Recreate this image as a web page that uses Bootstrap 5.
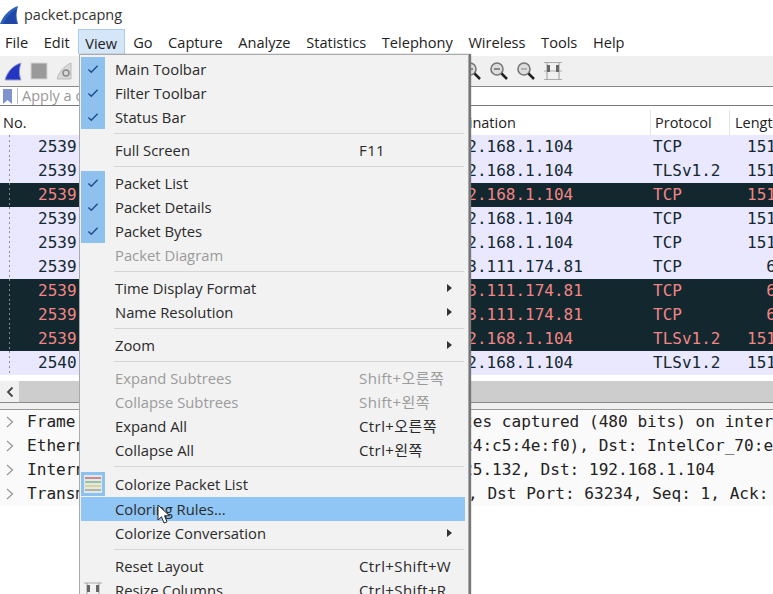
<!DOCTYPE html>
<html lang="en">
<head>
<meta charset="utf-8">
<title>packet.pcapng</title>
<link href="https://cdn.jsdelivr.net/npm/bootstrap@5.3.0/dist/css/bootstrap.min.css" rel="stylesheet">
<style>
html,body{margin:0;height:594px;overflow:hidden;background:#fff}
body{font-family:"Open Sans","Noto Sans CJK KR",sans-serif;font-size:14.8px;color:#222;position:relative;width:773px}
.ws-title{height:29px;gap:6px;font-size:14.5px;color:#333}
.ws-menubar{height:27px;padding:0 0 2px 5px;background:#fff;font-size:14.6px}
.ws-menubar span{margin-right:15.6px;line-height:27px;white-space:nowrap}
.ws-menubar .ws-open{background:#d4e6f8;border:1px solid #a9cbee;border-bottom:0;margin:0 8px 0 -7px;padding:0 7px 0 6px;height:25px;line-height:26px}
.ws-tools{height:31px;background:#f0f0f0;padding-left:4px;border-bottom:1px solid #888}
.ws-tools .ws-right{margin-left:auto;margin-right:210px;gap:7px}
.ws-filter{height:19px;background:#fff;border-bottom:1px solid #777;padding:0 0 0 3px;color:#999;font-size:14.5px}
.ws-filter .ws-sep{border-left:1px solid #bbb;height:16px;margin:0 4px 0 5px}
.ws-head{height:29px;padding-top:4px;background:#fff;font-size:14.5px;color:#222}
.ws-head div{height:25px;line-height:25px;white-space:nowrap;overflow:hidden}
.ws-hno{width:438px;flex:none;padding-left:3px}
.ws-hdst{width:213px;flex:none;border-right:1px solid #e4e4e4}
.ws-hpro{width:79px;flex:none;border-right:1px solid #e4e4e4;padding-left:4px}
.ws-hlen{flex:1;padding-left:5px}
.ws-list{font-family:"DejaVu Sans Mono","Liberation Mono",monospace;font-size:16px}
.ws-pkt{height:24px;line-height:23px;background:#e9e8ff;color:#12272e;white-space:pre;overflow:hidden}
.ws-pkt.ws-dark{background:#12272e;color:#f48585}
.ws-num{width:448px;flex:none;padding-left:38px;background-image:linear-gradient(#88a 50%,transparent 50%);background-size:1px 5px;background-repeat:repeat-y;background-position:9px 0}
.ws-dst{width:205px;flex:none}
.ws-proto{width:94px;flex:none}
.ws-len{flex:none}
.ws-spacer{height:6px;background:#fff}
.ws-hscroll{height:22px;background:#cdcdcd;border-bottom:1px solid #8a8a8a}
.ws-hscroll .ws-arrow{width:19px;background:#f0f0f0}
.ws-gap{height:7px;background:#f0f0f0;border-bottom:1px solid #999}
.ws-details{font-family:"DejaVu Sans Mono","Liberation Mono",monospace;font-size:16.1px;color:#222}
.ws-dl{height:24px;line-height:24px;white-space:pre;padding-left:6px;gap:13px;overflow:hidden;background:#fafafa}
.ws-dl svg{flex:none}
.ws-nudge{margin-right:5px}
.ws-menu.dropdown-menu{position:absolute;left:79px;top:54px;width:390px;height:560px;display:block;margin:0;padding:2px 0 0 1px;border:1px solid #aaa;border-radius:0;background:#f2f2f2;box-shadow:2px 0 1px #777;--bs-dropdown-font-size:14.8px;font-size:14.8px;color:#222}
.ws-item.dropdown-item{display:flex;align-items:center;height:24px;padding:0 3px 0 0;width:384px;color:#2a2a2a;line-height:24px;white-space:nowrap;background:transparent}
.ws-item .ws-gut{width:24px;height:24px;flex:none;margin-right:10px;display:flex;align-items:center;justify-content:center}
.ws-item .ws-gut.ws-on{background:#8fc1ef}
.ws-item .ws-lab{width:244px;flex:none}
.ws-item .ws-key{flex:1;font-size:15px;letter-spacing:.4px}
.ws-item .ws-sub{margin-right:10px;margin-left:auto;width:0;height:0;border-left:5px solid #333;border-top:4px solid transparent;border-bottom:4px solid transparent}
.ws-item.ws-off{color:#9b9b9b}
.ws-item.ws-hi{background:#90c6f5;margin-top:1px}
.ws-div{height:9px;padding:4px 4px 0 33px}
.ws-div.ws-div-tall{height:10px}
.ws-div hr{margin:0;border:0;border-top:1px solid #d6d6d6;opacity:1}
.ws-cursor{position:absolute;left:157px;top:504px;z-index:1001}
</style>
</head>
<body>
<div class="ws-title d-flex align-items-center">
  <svg width="18" height="20" viewBox="0 0 18 20"><path d="M0 19C3 11 9 4 18 1C16 7 16 13 18 19Z" fill="#2b5fb8"/><path d="M3 19C6 13 10 8 17 4C15 9 15 14 17 19Z" fill="#1f47a8"/></svg>
  <span>packet.pcapng</span>
</div>
<nav class="ws-menubar d-flex align-items-start">
  <span>File</span><span>Edit</span><span class="ws-open">View</span><span>Go</span><span>Capture</span><span>Analyze</span><span>Statistics</span><span>Telephony</span><span>Wireless</span><span>Tools</span><span>Help</span>
</nav>
<div class="ws-tools d-flex align-items-center">
  <svg width="18" height="19" viewBox="0 0 18 19"><path d="M1 18C3 10 9 3 17 1C15 7 15 13 17 18Z" fill="#2436c4" stroke="#9aa4c8"/></svg>
  <svg class="ms-2" width="18" height="18" viewBox="0 0 18 18"><rect x="1" y="1" width="16" height="16" fill="#9a9a9a" stroke="#d4d4d4"/></svg>
  <svg class="ms-2" width="18" height="18" viewBox="0 0 18 18"><path d="M1 17C3 10 8 4 15 1V17Z" fill="#d8d8d8" stroke="#bbb"/><circle cx="10" cy="11" r="3" fill="none" stroke="#888" stroke-width="1.5"/></svg>
  <div class="ws-right d-flex align-items-center">
    <svg width="20" height="20" viewBox="0 0 20 20"><circle cx="8" cy="8" r="6" fill="#ddd" stroke="#777" stroke-width="1.6"/><path d="M5 8h6M8 5v6" stroke="#333"/><path d="M12.500 12.500L18 18" stroke="#222" stroke-width="2.500"/></svg>
    <svg width="20" height="20" viewBox="0 0 20 20"><circle cx="8" cy="8" r="6" fill="#ddd" stroke="#777" stroke-width="1.6"/><path d="M5 8h6" stroke="#333"/><path d="M12.500 12.500L18 18" stroke="#222" stroke-width="2.500"/></svg>
    <svg width="20" height="20" viewBox="0 0 20 20"><circle cx="8" cy="8" r="6" fill="#ddd" stroke="#777" stroke-width="1.6"/><path d="M5 8h6" stroke="#888"/><path d="M12.500 12.500L18 18" stroke="#222" stroke-width="2.500"/></svg>
    <svg width="20" height="20" viewBox="0 0 20 20"><path d="M1 1.500h18M1 18.500h18M1 10h18" stroke="#aaa"/><path d="M4 2v16M16 2v16" stroke="#999"/><rect x="4" y="4" width="3" height="7" fill="#666"/><rect x="13" y="4" width="3" height="7" fill="#666"/></svg>
  </div>
</div>
<div class="ws-filter d-flex align-items-center">
  <svg width="9" height="15" viewBox="0 0 9 15"><path d="M0 0H9V15L4.500 11L0 15Z" fill="#7f93cc"/></svg>
  <span class="ws-sep"></span><span>Apply a display filter</span>
</div>
<div class="ws-head d-flex">
  <div class="ws-hno">No.</div><div class="ws-hdst">Destination</div><div class="ws-hpro">Protocol</div><div class="ws-hlen">Length</div>
</div>
<div class="ws-list">
  <div class="ws-pkt d-flex"><div class="ws-num">2539</div><div class="ws-dst">192.168.1.104</div><div class="ws-proto">TCP</div><div class="ws-len">1514</div></div>
  <div class="ws-pkt d-flex"><div class="ws-num">2539</div><div class="ws-dst">192.168.1.104</div><div class="ws-proto">TLSv1.2</div><div class="ws-len">1514</div></div>
  <div class="ws-pkt ws-dark d-flex"><div class="ws-num">2539</div><div class="ws-dst">192.168.1.104</div><div class="ws-proto">TCP</div><div class="ws-len">1514</div></div>
  <div class="ws-pkt d-flex"><div class="ws-num">2539</div><div class="ws-dst">192.168.1.104</div><div class="ws-proto">TCP</div><div class="ws-len">1514</div></div>
  <div class="ws-pkt d-flex"><div class="ws-num">2539</div><div class="ws-dst">192.168.1.104</div><div class="ws-proto">TCP</div><div class="ws-len">1514</div></div>
  <div class="ws-pkt d-flex"><div class="ws-num">2539</div><div class="ws-dst">223.111.174.81</div><div class="ws-proto">TCP</div><div class="ws-len">  60</div></div>
  <div class="ws-pkt ws-dark d-flex"><div class="ws-num">2539</div><div class="ws-dst">223.111.174.81</div><div class="ws-proto">TCP</div><div class="ws-len">  60</div></div>
  <div class="ws-pkt ws-dark d-flex"><div class="ws-num">2539</div><div class="ws-dst">223.111.174.81</div><div class="ws-proto">TCP</div><div class="ws-len">  60</div></div>
  <div class="ws-pkt ws-dark d-flex"><div class="ws-num">2539</div><div class="ws-dst">192.168.1.104</div><div class="ws-proto">TLSv1.2</div><div class="ws-len">1514</div></div>
  <div class="ws-pkt d-flex"><div class="ws-num">2540</div><div class="ws-dst">192.168.1.104</div><div class="ws-proto">TLSv1.2</div><div class="ws-len">1514</div></div>
</div>
<div class="ws-spacer"></div>
<div class="ws-hscroll d-flex">
  <div class="ws-arrow d-flex align-items-center justify-content-center"><svg width="8" height="12" viewBox="0 0 8 12"><path d="M6.500 1.500L2 6L6.500 10.500" fill="none" stroke="#444" stroke-width="1.800"/></svg></div>
</div>
<div class="ws-gap"></div>
<div class="ws-details">
  <div class="ws-dl d-flex"><svg width="8" height="24" viewBox="0 0 8 24"><path d="M1 7L6.500 12L1 17" fill="none" stroke="#999" stroke-width="1.300"/></svg><span>Frame 254: 60 bytes on wire (480 bits), 60 bytes captured (480 bits) on interface</span></div>
  <div class="ws-dl d-flex"><svg width="8" height="24" viewBox="0 0 8 24"><path d="M1 7L6.500 12L1 17" fill="none" stroke="#999" stroke-width="1.300"/></svg><span>Ethernet II, Src: Netgear_c4:c5:4e:f0 (a0:40:c4:c5:4e:f0), Dst: IntelCor_70:e0</span></div>
  <div class="ws-dl d-flex"><svg width="8" height="24" viewBox="0 0 8 24"><path d="M1 7L6.500 12L1 17" fill="none" stroke="#999" stroke-width="1.300"/></svg><span>Internet Protocol Version 4, Src:   151.101.225.132, Dst: 192.168.1.104</span></div>
  <div class="ws-dl d-flex"><svg width="8" height="24" viewBox="0 0 8 24"><path d="M1 7L6.500 12L1 17" fill="none" stroke="#999" stroke-width="1.300"/></svg><span><span class="ws-nudge">Transmission Control Protocol, Src Port: 8443</span>, Dst Port: 63234, Seq: 1, Ack: 1</span></div>
</div>

<svg width="0" height="0" class="position-absolute"><defs><symbol id="ws-check" viewBox="0 0 14 12"><path d="M1.500 6.500L5 10L12.500 2" fill="none" stroke="#1d4f8c" stroke-width="1.700"/></symbol></defs></svg>

<div class="dropdown-menu ws-menu">
  <div class="ws-item dropdown-item"><span class="ws-gut ws-on"><svg width="12" height="10"><use href="#ws-check"/></svg></span><span class="ws-lab">Main Toolbar</span></div>
  <div class="ws-item dropdown-item"><span class="ws-gut ws-on"><svg width="12" height="10"><use href="#ws-check"/></svg></span><span class="ws-lab">Filter Toolbar</span></div>
  <div class="ws-item dropdown-item"><span class="ws-gut ws-on"><svg width="12" height="10"><use href="#ws-check"/></svg></span><span class="ws-lab">Status Bar</span></div>
  <div class="ws-div"><hr></div>
  <div class="ws-item dropdown-item"><span class="ws-gut"></span><span class="ws-lab">Full Screen</span><span class="ws-key">F11</span></div>
  <div class="ws-div"><hr></div>
  <div class="ws-item dropdown-item"><span class="ws-gut ws-on"><svg width="12" height="10"><use href="#ws-check"/></svg></span><span class="ws-lab">Packet List</span></div>
  <div class="ws-item dropdown-item"><span class="ws-gut ws-on"><svg width="12" height="10"><use href="#ws-check"/></svg></span><span class="ws-lab">Packet Details</span></div>
  <div class="ws-item dropdown-item"><span class="ws-gut ws-on"><svg width="12" height="10"><use href="#ws-check"/></svg></span><span class="ws-lab">Packet Bytes</span></div>
  <div class="ws-item dropdown-item ws-off"><span class="ws-gut"></span><span class="ws-lab">Packet Diagram</span></div>
  <div class="ws-div"><hr></div>
  <div class="ws-item dropdown-item"><span class="ws-gut"></span><span class="ws-lab">Time Display Format</span><span class="ws-sub"></span></div>
  <div class="ws-item dropdown-item"><span class="ws-gut"></span><span class="ws-lab">Name Resolution</span><span class="ws-sub"></span></div>
  <div class="ws-div"><hr></div>
  <div class="ws-item dropdown-item"><span class="ws-gut"></span><span class="ws-lab">Zoom</span><span class="ws-sub"></span></div>
  <div class="ws-div"><hr></div>
  <div class="ws-item dropdown-item ws-off"><span class="ws-gut"></span><span class="ws-lab">Expand Subtrees</span><span class="ws-key">Shift+오른쪽</span></div>
  <div class="ws-item dropdown-item ws-off"><span class="ws-gut"></span><span class="ws-lab">Collapse Subtrees</span><span class="ws-key">Shift+왼쪽</span></div>
  <div class="ws-item dropdown-item"><span class="ws-gut"></span><span class="ws-lab">Expand All</span><span class="ws-key">Ctrl+오른쪽</span></div>
  <div class="ws-item dropdown-item"><span class="ws-gut"></span><span class="ws-lab">Collapse All</span><span class="ws-key">Ctrl+왼쪽</span></div>
  <div class="ws-div ws-div-tall"><hr></div>
  <div class="ws-item dropdown-item"><span class="ws-gut ws-on"><svg width="20" height="20" viewBox="0 0 20 20"><rect x="1" y="1" width="18" height="18" fill="#dfe8f0"/><path d="M2 4h16" stroke="#c96a6a" stroke-width="1.500"/><path d="M2 8h16" stroke="#88b878" stroke-width="1.500"/><path d="M2 12h16" stroke="#d8d070" stroke-width="1.500"/><path d="M2 16h16" stroke="#a8a080" stroke-width="1.500"/></svg></span><span class="ws-lab">Colorize Packet List</span></div>
  <div class="ws-item dropdown-item ws-hi"><span class="ws-gut"></span><span class="ws-lab">Coloring Rules...</span></div>
  <div class="ws-item dropdown-item"><span class="ws-gut"></span><span class="ws-lab">Colorize Conversation</span><span class="ws-sub"></span></div>
  <div class="ws-div"><hr></div>
  <div class="ws-item dropdown-item"><span class="ws-gut"></span><span class="ws-lab">Reset Layout</span><span class="ws-key">Ctrl+Shift+W</span></div>
  <div class="ws-item dropdown-item"><span class="ws-gut"><svg width="20" height="20" viewBox="0 0 20 20"><path d="M1 3h18M1 17h18" stroke="#aaa"/><path d="M4 3v14M16 3v14" stroke="#999"/><rect x="4" y="5" width="3" height="7" fill="#666"/><rect x="13" y="5" width="3" height="7" fill="#666"/></svg></span><span class="ws-lab">Resize Columns</span><span class="ws-key">Ctrl+Shift+R</span></div>
</div>

<svg class="ws-cursor" width="15" height="21" viewBox="0 0 15 21"><path d="M1 1V16L4.500 12.800L7 19L10 17.800L7.500 11.800H12.500Z" fill="#fff" stroke="#222" stroke-width="1"/></svg>
</body>
</html>
